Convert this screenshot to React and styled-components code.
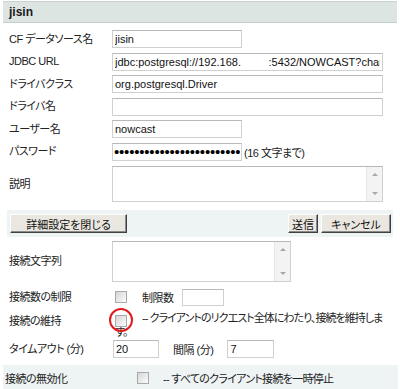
import React from "react";
import styled, { createGlobalStyle } from "styled-components";

const GlobalStyle = createGlobalStyle`
  html, body {
    margin: 0;
    padding: 0;
    background: #ffffff;
  }
  body {
    font-family: "Liberation Sans", "Noto Sans CJK JP", sans-serif;
    font-size: 11px;
    color: #222222;
    font-feature-settings: "palt";
    letter-spacing: -0.5px;
  }
`;

export default function App() {
  return (
    <>
      <GlobalStyle />
      <Panel>
        <Header>jisin</Header>
        <Form $top={5}>
          <Row>
            <Label>CF データソース名</Label>
            <Field>
              <Input readOnly value="jisin" $w={130} />
            </Field>
          </Row>
          <Row>
            <Label>JDBC URL</Label>
            <Field>
              <Input
                readOnly
                value="jdbc:postgresql://192.168.         :5432/NOWCAST?charSet=UTF8"
                $w={271}
              />
            </Field>
          </Row>
          <Row>
            <Label>ドライバクラス</Label>
            <Field>
              <Input readOnly value="org.postgresql.Driver" $w={271} />
            </Field>
          </Row>
          <Row>
            <Label>ドライバ名</Label>
            <Field>
              <Input readOnly value="" $w={271} />
            </Field>
          </Row>
          <Row>
            <Label>ユーザー名</Label>
            <Field>
              <Input readOnly value="nowcast" $w={130} />
            </Field>
          </Row>
          <Row>
            <Label>パスワード</Label>
            <Field>
              <Password readOnly value={"•".repeat(40)} $w={130} />
              <Note>(16 文字まで)</Note>
            </Field>
          </Row>
          <AreaRow $top={3}>
            <Label>説明</Label>
            <Field>
              <TextArea $w={271} $h={36} />
            </Field>
          </AreaRow>
        </Form>

        <ButtonBar>
          <Button $w={117}>詳細設定を閉じる</Button>
          <Spacer />
          <Button $w={30}>送信</Button>
          <Button $w={70}>キャンセル</Button>
        </ButtonBar>

        <Form>
          <AreaRow $top={4}>
            <Label>接続文字列</Label>
            <Field>
              <TextArea $w={179} $h={41} />
            </Field>
          </AreaRow>
          <Row $h={30}>
            <Label>接続数の制限</Label>
            <Field $pad={3}>
              <Check />
              <Inline $ml={15}>制限数</Inline>
              <Input readOnly value="" $w={42} $h={17} $ml={8} />
            </Field>
          </Row>
          <KeepRow>
            <Label $top={2}>接続の維持</Label>
            <Wrap>
              <Marked>
                <Check />
                <Ring />
              </Marked>
              <WrapText>
                -- クライアントのリクエスト全体にわたり、接続を維持します。
              </WrapText>
            </Wrap>
          </KeepRow>
          <Row $h={22}>
            <Label>タイムアウト (分)</Label>
            <Field $pad={1}>
              <Input readOnly value="20" $w={46} />
              <Inline $ml={14}>間隔 (分)</Inline>
              <Input readOnly value="7" $w={47} $ml={14} />
            </Field>
          </Row>
        </Form>

        <DisableBar>
          <BarLabel>接続の無効化</BarLabel>
          <Check />
          <Inline $ml={14} $ls={-0.7}>
            -- すべてのクライアント接続を一時停止
          </Inline>
        </DisableBar>
      </Panel>
    </>
  );
}

function TextArea({ $w, $h }) {
  return (
    <AreaBox $w={$w} $h={$h}>
      <AreaBody />
      <Scroll>
        <ArrowUp />
        <ArrowDown />
      </Scroll>
    </AreaBox>
  );
}

//styled-components
const Panel = styled.div`
  width: 400px;
  height: 389px;
  overflow: hidden;
  padding-top: 1px;
  box-sizing: border-box;
`;

const Header = styled.div`
  margin: 0 3px;
  height: 20px;
  line-height: 20px;
  padding-left: 6px;
  background: #dde5e3;
  border-top: 1px solid #ccd4d2;
  border-bottom: 1px solid #c6cfcd;
  font-size: 12px;
  font-weight: bold;
  letter-spacing: 0;
  color: #1a1a1a;
`;

const Form = styled.div`
  padding: ${(p) => p.$top || 0}px 3px 0;
`;

const Row = styled.div`
  display: grid;
  grid-template-columns: 103px 1fr;
  align-items: center;
  height: ${(p) => p.$h || 22.5}px;
  padding-left: 6px;
`;

const AreaRow = styled(Row)`
  height: auto;
  margin-top: ${(p) => p.$top}px;
`;

const KeepRow = styled.div`
  display: grid;
  grid-template-columns: 103px 1fr;
  align-items: start;
  height: 26px;
  padding-left: 6px;
`;

const Label = styled.div`
  white-space: nowrap;
  color: #222;
  line-height: 15px;
  margin-top: ${(p) => p.$top || 0}px;
`;

const Field = styled.div`
  display: flex;
  align-items: center;
  padding-left: ${(p) => p.$pad || 0}px;
`;

const Input = styled.input`
  box-sizing: border-box;
  width: ${(p) => p.$w}px;
  height: ${(p) => p.$h || 18}px;
  margin: 0 0 0 ${(p) => p.$ml || 0}px;
  padding: 0 2px;
  border: 1px solid #d0d0d0;
  border-top-color: #b8b8b8;
  border-radius: 0;
  background: #fff;
  font-family: "Liberation Sans", sans-serif;
  font-size: 11px;
  letter-spacing: 0;
  color: #111;
  outline: none;
`;

const Password = styled(Input)`
  font-size: 15px;
  letter-spacing: -0.2px;
  padding: 0 1px;
  color: #000;
`;

const Note = styled.span`
  margin-left: 2px;
  white-space: nowrap;
`;

const Inline = styled.span`
  margin-left: ${(p) => p.$ml || 0}px;
  letter-spacing: ${(p) => (p.$ls != null ? `${p.$ls}px` : "inherit")};
  white-space: nowrap;
`;

const AreaBox = styled.div`
  box-sizing: border-box;
  width: ${(p) => p.$w}px;
  height: ${(p) => p.$h}px;
  display: flex;
  border: 1px solid #d0d0d0;
  border-top-color: #b8b8b8;
  background: #fff;
`;

const AreaBody = styled.div`
  flex: 1;
`;

const Scroll = styled.div`
  width: 15px;
  display: flex;
  flex-direction: column;
  justify-content: space-between;
  align-items: center;
  padding: 6px 0;
  background: #f3f3f3;
  border-left: 1px solid #e6e6e6;
`;

const ArrowUp = styled.span`
  width: 0;
  height: 0;
  border-left: 3px solid transparent;
  border-right: 3px solid transparent;
  border-bottom: 3px solid #a8a8a8;
`;

const ArrowDown = styled.span`
  width: 0;
  height: 0;
  border-left: 3px solid transparent;
  border-right: 3px solid transparent;
  border-top: 3px solid #a8a8a8;
`;

const ButtonBar = styled.div`
  margin: 8px 7px 0 7px;
  height: 27px;
  display: flex;
  align-items: center;
  gap: 3px;
  padding: 0 2px 0 3px;
  background: #eef3f3;
`;

const Spacer = styled.div`
  flex: 1;
`;

const Button = styled.div`
  box-sizing: border-box;
  width: ${(p) => p.$w}px;
  height: 19px;
  display: flex;
  align-items: center;
  justify-content: center;
  background: #e9e7df;
  border-top: 1px solid #ffffff;
  border-left: 1px solid #ffffff;
  border-right: 1px solid #404040;
  border-bottom: 1px solid #404040;
  box-shadow: inset -1px -1px 0 #8a8a8a;
  color: #111;
  font-size: 11px;
  letter-spacing: 0;
  white-space: nowrap;
`;

const Check = styled.span`
  display: inline-block;
  flex: none;
  box-sizing: border-box;
  width: 12px;
  height: 12px;
  border: 1px solid #a9a9a9;
  background: linear-gradient(135deg, #d6d6d6 0%, #f4f4f4 80%, #ffffff 100%);
  vertical-align: middle;
`;

const Wrap = styled.div`
  padding-left: 3px;
  width: 274px;
  line-height: 13px;
`;

const Marked = styled.span`
  position: relative;
  display: inline-block;
  width: 12px;
  height: 12px;
  vertical-align: -2px;
  margin-top: 1px;
`;

const Ring = styled.span`
  position: absolute;
  left: -6px;
  top: -6px;
  width: 20px;
  height: 20px;
  border: 2px solid #e01b1b;
  border-radius: 50%;
`;

const WrapText = styled.span`
  margin-left: 15px;
  letter-spacing: -0.95px;
`;

const DisableBar = styled.div`
  margin: 5px 2px 0 3px;
  height: 26px;
  display: flex;
  align-items: center;
  padding-left: 2px;
  background: #eef3f3;
`;

const BarLabel = styled.div`
  width: 132px;
  white-space: nowrap;
`;
